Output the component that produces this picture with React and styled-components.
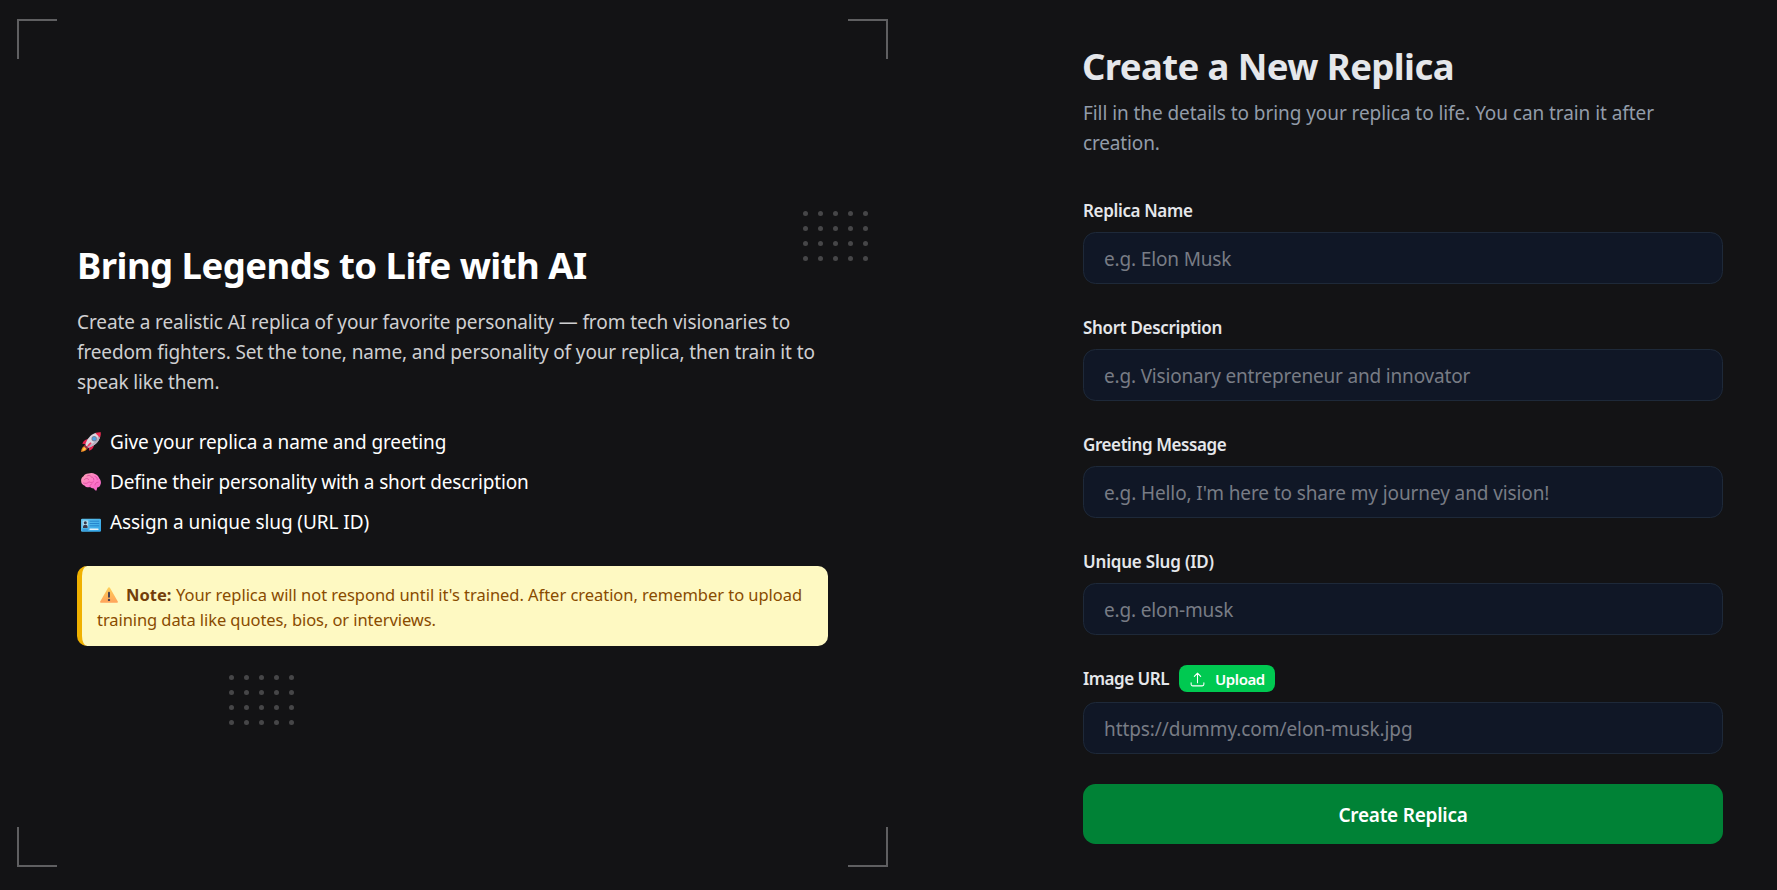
import React from "react";
import styled, { createGlobalStyle } from "styled-components";

const GlobalStyle = createGlobalStyle`
  *, *::before, *::after { box-sizing: border-box; }
  body {
    margin: 0;
    background: #131315;
    color: #fff;
    font-family: "Noto Sans", "Open Sans", sans-serif;
    font-size: 19px;
    line-height: 30px;
    overflow: hidden;
  }
  h1, h2, p, ul { margin: 0; padding: 0; }
`;

const Page = styled.main`
  display: flex;
  height: 890px;
`;

const IntroPanel = styled.section`
  position: relative;
  display: flex;
  flex-direction: column;
  justify-content: center;
  width: 905px;
  height: 888px;
  padding: 0 77px;
`;

const Corner = styled.span`
  position: absolute;
  ${(p) => p.$v}: ${(p) => (p.$v === "top" ? 19 : 21)}px;
  ${(p) => p.$h}: 17px;
  width: 40px;
  height: 40px;
  border: 0 solid #5f5f61;
  border-${(p) => p.$v}-width: 2px;
  border-${(p) => p.$h}-width: 2px;
`;

const DotGrid = styled.div`
  position: absolute;
  left: ${(p) => p.$x}px;
  top: ${(p) => p.$y}px;
  display: grid;
  grid-template-columns: repeat(5, 5px);
  gap: 10px;
`;

const Dot = styled.span`
  width: 5px;
  height: 5px;
  border-radius: 50%;
  background: #464648;
`;

const Track = styled.span`
  letter-spacing: ${(p) => p.$ls}px;
  white-space: nowrap;
`;

const IntroTitle = styled.h2`
  height: 45px;
  padding-top: 1px;
  font-size: 36.5px;
  line-height: 45px;
  font-weight: 700;
`;

const IntroText = styled.p`
  display: flex;
  flex-direction: column;
  margin-top: 20px;
  color: #cfcfd1;
`;

const Steps = styled.ul`
  display: flex;
  flex-direction: column;
  gap: 10px;
  margin-top: 30px;
  list-style: none;
`;

const Step = styled.li`
  display: flex;
  align-items: center;
  height: 30px;
`;

const StepIcon = styled.span`
  display: flex;
  width: 29px;
  margin-left: 4px;
`;

const Note = styled.aside`
  height: 80px;
  margin-top: 29px;
  padding: 16px 0 14px 15px;
  border-left: 5px solid #f0b100;
  border-radius: 10px;
  background: #fef9c2;
  color: #894b00;
  font-size: 16.5px;
  line-height: 25px;
`;

const NoteLine = styled.div`
  display: flex;
  height: 25px;
`;

const NoteIcon = styled.span`
  display: flex;
  align-items: center;
  width: 26px;
  margin-left: 3px;
`;

const NoteLabel = styled.strong`
  width: 50px;
  color: #733e0a;
  font-weight: 700;
`;

const FormPanel = styled.section`
  width: 640px;
  margin-left: 178px;
  padding-top: 43px;
`;

const FormTitle = styled.h1`
  height: 45px;
  padding-top: 1px;
  margin-left: -1px;
  color: #e5e7eb;
  font-size: 36.5px;
  line-height: 45px;
  font-weight: 700;
`;

const FormText = styled.p`
  display: flex;
  flex-direction: column;
  margin: 10px 0 39px;
  color: #929ca9;
`;

const Form = styled.form`
  display: flex;
  flex-direction: column;
  gap: 30px;
`;

const Field = styled.div`
  display: flex;
  flex-direction: column;
  gap: ${(p) => (p.$action ? 10 : 9)}px;
`;

const LabelRow = styled.div`
  display: flex;
  align-items: center;
  height: ${(p) => (p.$action ? 27 : 26)}px;
`;

const Label = styled.label`
  width: ${(p) => (p.$action ? "96px" : "auto")};
  padding-top: ${(p) => (p.$action ? 0 : 2)}px;
  color: #e5e7eb;
  font-size: 17px;
  line-height: 26px;
  font-weight: 600;
`;

const Input = styled.input`
  width: 100%;
  height: 52px;
  padding: 2px 20px 0;
  border: 1px solid #1e2939;
  border-radius: 12.5px;
  outline: none;
  background: #101726;
  color: #e5e7eb;
  font: inherit;
  letter-spacing: ${(p) => p.$ls}px;
  &::placeholder { color: #787c85; opacity: 1; }
`;

const UploadButton = styled.button`
  display: flex;
  align-items: center;
  gap: 9px;
  width: 96px;
  height: 27px;
  padding: 1px 0 0 10px;
  border: 0;
  border-radius: 8px;
  background: #00c951;
  color: #fff;
  font: 600 15px/27px "Noto Sans", "Open Sans", sans-serif;
  svg { flex: none; }
`;

const SubmitButton = styled.button`
  height: 60px;
  padding: 2px 0 0;
  border: 0;
  border-radius: 12.5px;
  background: #008236;
  color: #fff;
  font: 600 19px/30px "Noto Sans", "Open Sans", sans-serif;
`;

const UploadIcon = () => (
  <svg width="17" height="17" viewBox="0 0 24 24" fill="none" stroke="currentColor" strokeWidth="1.5" strokeLinecap="round" strokeLinejoin="round">
    <path d="M3 16.5v2.25A2.25 2.25 0 0 0 5.25 21h13.5A2.25 2.25 0 0 0 21 18.75V16.5m-13.5-9L12 3m0 0 4.5 4.5M12 3v13.5" />
  </svg>
);

const RocketIcon = () => (
  <svg width="20" height="20" viewBox="0 0 20 20">
    <path d="M4.5 13.5C2 14 .5 16 0 20c3.500-.4 5.600-1.700 6.500-4z" fill="#f08a24" />
    <path d="M3.800 15.200C2.500 15.800 1.700 16.900 1.500 18.600c1.700-.2 2.900-.9 3.500-2.200z" fill="#ffc94d" />
    <path d="M7.500 7.200C4.500 7 2.500 8.500 1.300 11.800l4.300.5zM12.800 12.500c.2 3-1.300 5-4.600 6.300l-.5-4.400z" fill="#e5224f" />
    <path d="M4.200 13.200C5.500 7.500 9.500 2.300 15.200.8l4 4C17.700 10.500 12.500 14.500 6.800 15.800z" fill="#dcd5df" />
    <path d="M5.800 14.800C11.500 12.500 16 8.500 17.600 3.200l1.600 1.600C17.700 10.500 12.500 14.500 6.800 15.800z" fill="#b9aebf" />
    <path d="M14.300 1.100C16.200.3 18 0 19.800.2c.2 1.800-.1 3.600-.9 5.500z" fill="#ef2c52" />
    <path d="M3.800 12.600l3.600 3.600-1.500 1-3.100-3.100z" fill="#8d2748" />
    <path d="M9.700 10.300c-2 1.400-3.300 3-4 5 2-.7 3.600-2 5-4z" fill="#f23c62" />
    <circle cx="13.200" cy="6.700" r="2.700" fill="#7b8297" />
    <circle cx="13.200" cy="6.700" r="1.800" fill="#4aa3ea" />
  </svg>
);

const BrainIcon = () => (
  <svg width="20" height="20" viewBox="0 0 20 20">
    <defs>
      <linearGradient id="brain" x1="0" y1="0" x2="1" y2="1">
        <stop offset="0" stopColor="#f7a3ad" />
        <stop offset=".55" stopColor="#ff77cb" />
        <stop offset="1" stopColor="#ee5fc4" />
      </linearGradient>
    </defs>
    <path d="M7.500 1.600C9.500.6 12 .7 14 2c2.200.7 3.700 2.300 4.200 4.300 1.800 2 2.200 4.500 1.200 6.500-.4 1.700-1.600 2.600-3.200 2.700l-.6 2.900c-1.300.1-2.200-.6-2.700-2-1.600.1-2.900-.4-3.800-1.400-2.200.7-4.400.2-5.300-1.300C1.500 13 .3 11.500.2 9.500-.2 7.300.7 5.400 2.500 4.300 3.500 2.500 5.300 1.500 7.500 1.600z" fill="url(#brain)" />
    <path d="M3.500 7.500c1.500-1.500 3-1.500 4.200 0M6 4c1.500-1 3-.8 4 .5M10.500 5c1.700.2 2.500 1.200 2.300 3M14 4.500c1.500.4 2.300 1.400 2.300 3M2.500 11c2 .8 4 .4 5.500-1.200 1.500.9 3 .9 4.500 0M9.100 14.800c-.5-1.400.1-2.400 1.800-3M14 13c.1-1.700 1.200-2.700 3.200-2.800" fill="none" stroke="#d94b9d" strokeWidth=".8" strokeLinecap="round" />
  </svg>
);

const CardIcon = () => (
  <svg width="20" height="20" viewBox="0 0 20 20">
    <defs>
      <linearGradient id="card" x1="0" y1="0" x2="1" y2="1">
        <stop offset="0" stopColor="#63c3ec" />
        <stop offset="1" stopColor="#2fa4e8" />
      </linearGradient>
    </defs>
    <rect x="0" y="6.800" width="20" height="13" rx="1.200" fill="url(#card)" />
    <rect x="1.500" y="8.600" width="5.600" height="7.400" rx=".5" fill="#a9daf0" />
    <circle cx="4.300" cy="10.800" r="1.500" fill="#39394b" />
    <path d="M2 16v-1.200c0-1.300 1-2 2.300-2s2.300.7 2.300 2V16z" fill="#39394b" />
    <path d="M8.600 9.200h9.600M8.600 11.500h9.600M8.600 13.800h9.600" stroke="#2380cb" strokeWidth=".9" />
    <path d="M1.500 18h5.500" stroke="#2380cb" strokeWidth=".8" />
    <rect x="8.500" y="16.600" width="9" height="1.500" rx=".3" fill="#e5f3fb" />
  </svg>
);

const WarningIcon = () => (
  <svg width="18" height="16" viewBox="0 0 18 16">
    <defs>
      <linearGradient id="warn" x1="0" y1="0" x2="0" y2="1">
        <stop offset="0" stopColor="#ffcf57" />
        <stop offset="1" stopColor="#ffa35c" />
      </linearGradient>
    </defs>
    <path d="M8.100.8c.4-.7 1.400-.7 1.800 0l7.900 13.700c.4.700 0 1.300-.7 1.300H.9c-.7 0-1.100-.6-.7-1.300z" fill="url(#warn)" />
    <rect x="8" y="4.700" width="2" height="6" rx=".9" fill="#4a4350" />
    <circle cx="9" cy="12.900" r="1.200" fill="#4a4350" />
  </svg>
);

const Dots = ({ x, y }) => (
  <DotGrid $x={x} $y={y} aria-hidden="true">
    {Array.from({ length: 20 }, (_, i) => <Dot key={i} />)}
  </DotGrid>
);

const steps = [
  { Icon: RocketIcon, text: "Give your replica a name and greeting", ls: -0.11 },
  { Icon: BrainIcon, text: "Define their personality with a short description", ls: -0.15 },
  { Icon: CardIcon, text: "Assign a unique slug (URL ID)", ls: -0.08 },
];

const fields = [
  { id: "name", label: "Replica Name", ls: -0.35, hint: "e.g. Elon Musk", hintLs: -0.15 },
  { id: "description", label: "Short Description", ls: -0.33, hint: "e.g. Visionary entrepreneur and innovator", hintLs: -0.18 },
  { id: "greeting", label: "Greeting Message", ls: -0.41, hint: "e.g. Hello, I'm here to share my journey and vision!", hintLs: -0.11 },
  { id: "slug", label: "Unique Slug (ID)", ls: -0.2, hint: "e.g. elon-musk", hintLs: -0.15 },
  { id: "image", label: "Image URL", ls: -0.5, hint: "https://dummy.com/elon-musk.jpg", hintLs: -0.08, action: true },
];

export default function App() {
  return (
    <>
      <GlobalStyle />
      <Page>
        <IntroPanel>
          <Corner $v="top" $h="left" />
          <Corner $v="top" $h="right" />
          <Corner $v="bottom" $h="left" />
          <Corner $v="bottom" $h="right" />
          <Dots x={803} y={211} />
          <Dots x={229} y={675} />
          <IntroTitle><Track $ls={-0.53}>Bring Legends to Life with AI</Track></IntroTitle>
          <IntroText>
            <Track $ls={-0.095}>Create a realistic AI replica of your favorite personality — from tech visionaries to</Track>
            <Track $ls={-0.13}>freedom fighters. Set the tone, name, and personality of your replica, then train it to</Track>
            <Track $ls={-0.17}>speak like them.</Track>
          </IntroText>
          <Steps>
            {steps.map(({ Icon, text, ls }) => (
              <Step key={text}>
                <StepIcon><Icon /></StepIcon>
                <Track $ls={ls}>{text}</Track>
              </Step>
            ))}
          </Steps>
          <Note>
            <NoteLine>
              <NoteIcon><WarningIcon /></NoteIcon>
              <NoteLabel>Note:</NoteLabel>
              <Track $ls={-0.04}>Your replica will not respond until it's trained. After creation, remember to upload</Track>
            </NoteLine>
            <NoteLine>
              <Track $ls={-0.08}>training data like quotes, bios, or interviews.</Track>
            </NoteLine>
          </Note>
        </IntroPanel>
        <FormPanel>
          <FormTitle><Track $ls={-0.6}>Create a New Replica</Track></FormTitle>
          <FormText>
            <Track $ls={-0.07}>Fill in the details to bring your replica to life. You can train it after</Track>
            <Track $ls={-0.15}>creation.</Track>
          </FormText>
          <Form onSubmit={(e) => e.preventDefault()}>
            {fields.map((f) => (
              <Field key={f.id} $action={f.action}>
                <LabelRow $action={f.action}>
                  <Label htmlFor={f.id} $action={f.action}><Track $ls={f.ls}>{f.label}</Track></Label>
                  {f.action && (
                    <UploadButton type="button">
                      <UploadIcon />
                      <Track $ls={-0.4}>Upload</Track>
                    </UploadButton>
                  )}
                </LabelRow>
                <Input id={f.id} placeholder={f.hint} $ls={f.hintLs} />
              </Field>
            ))}
            <SubmitButton type="submit"><Track $ls={-0.25}>Create Replica</Track></SubmitButton>
          </Form>
        </FormPanel>
      </Page>
    </>
  );
}
